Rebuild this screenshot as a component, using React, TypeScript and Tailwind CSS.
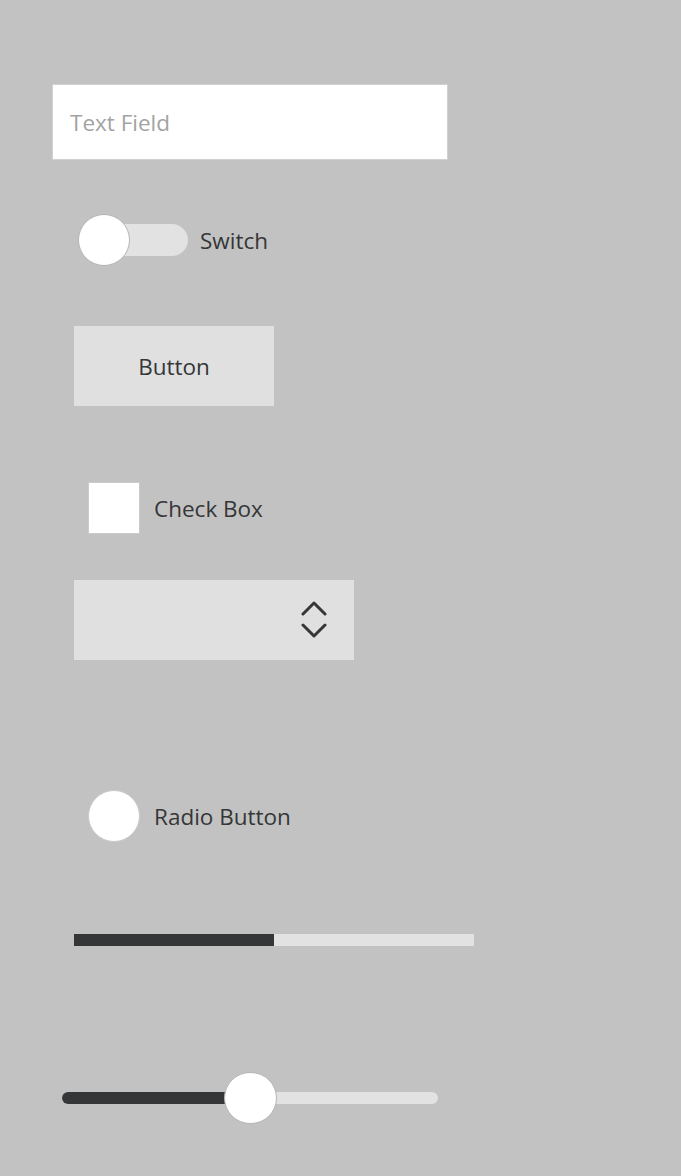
import React from "react";

export default function App() {
  const font = { fontFamily: '"Open Sans", "Noto Sans", sans-serif' };
  return (
    <div className="w-[681px] h-[1176px] bg-[#c2c2c2] overflow-hidden" style={font}>
      <div className="flex flex-col">
        {/* Text field */}
        <div className="mt-[84px] ml-[52px] w-[396px] h-[76px] bg-white border border-[#d0d0d0] flex items-center pl-[17px]">
          <span className="text-[22.5px] text-[#a3a3a3] leading-none translate-y-[1px]">Text Field</span>
        </div>

        {/* Switch */}
        <div className="mt-[54px] ml-[78px] flex items-center h-[52px]">
          <div className="relative w-[110px] h-[52px] flex items-center">
            <div className="ml-[1px] w-[109px] h-[32px] rounded-full bg-[#e2e2e2]" />
            <div className="absolute left-0 top-0 w-[52px] h-[52px] rounded-full bg-white border border-[#b5b5b5]" />
          </div>
          <span className="ml-[12px] text-[22.5px] text-[#353637] leading-none translate-y-[1px]">Switch</span>
        </div>

        {/* Button */}
        <div className="mt-[60px] ml-[74px] w-[200px] h-[80px] bg-[#e0e0e0] flex items-center justify-center">
          <span className="text-[22.5px] text-[#353637] leading-none translate-y-[1px]">Button</span>
        </div>

        {/* Check box */}
        <div className="mt-[76px] ml-[88px] flex items-center h-[52px]">
          <div className="w-[52px] h-[52px] bg-white border border-[#cbcbcb]" />
          <span className="ml-[14px] text-[22.5px] text-[#353637] leading-none translate-y-[1px]">Check Box</span>
        </div>

        {/* Combo box */}
        <div className="mt-[46px] ml-[74px] w-[280px] h-[80px] bg-[#e0e0e0] flex items-center justify-end pr-[27px]">
          <svg width="26" height="42" viewBox="0 0 26 42" fill="none">
            <path d="M2 15 L13 4 L24 15" stroke="#353637" strokeWidth="3" strokeLinecap="round" strokeLinejoin="round" />
            <path d="M2 26 L13 37 L24 26" stroke="#353637" strokeWidth="3" strokeLinecap="round" strokeLinejoin="round" />
          </svg>
        </div>

        {/* Radio button */}
        <div className="mt-[130px] ml-[88px] flex items-center h-[52px]">
          <div className="w-[52px] h-[52px] rounded-full bg-white border border-[#cbcbcb]" />
          <span className="ml-[14px] text-[22.5px] text-[#353637] leading-none translate-y-[1px]">Radio Button</span>
        </div>

        {/* Progress bar */}
        <div className="mt-[92px] ml-[74px] w-[400px] h-[12px] bg-[#e2e2e2] flex">
          <div className="w-[200px] h-full bg-[#353637]" />
        </div>

        {/* Slider */}
        <div className="mt-[126px] ml-[62px] relative w-[376px] h-[52px] flex items-center">
          <div className="w-full h-[12px] rounded-full bg-[#e2e2e2] flex overflow-hidden">
            <div className="w-[188px] h-full bg-[#353637]" />
          </div>
          <div className="absolute left-[162px] top-0 w-[53px] h-[52px] rounded-full bg-white border border-[#b5b5b5]" />
        </div>
      </div>
    </div>
  );
}
